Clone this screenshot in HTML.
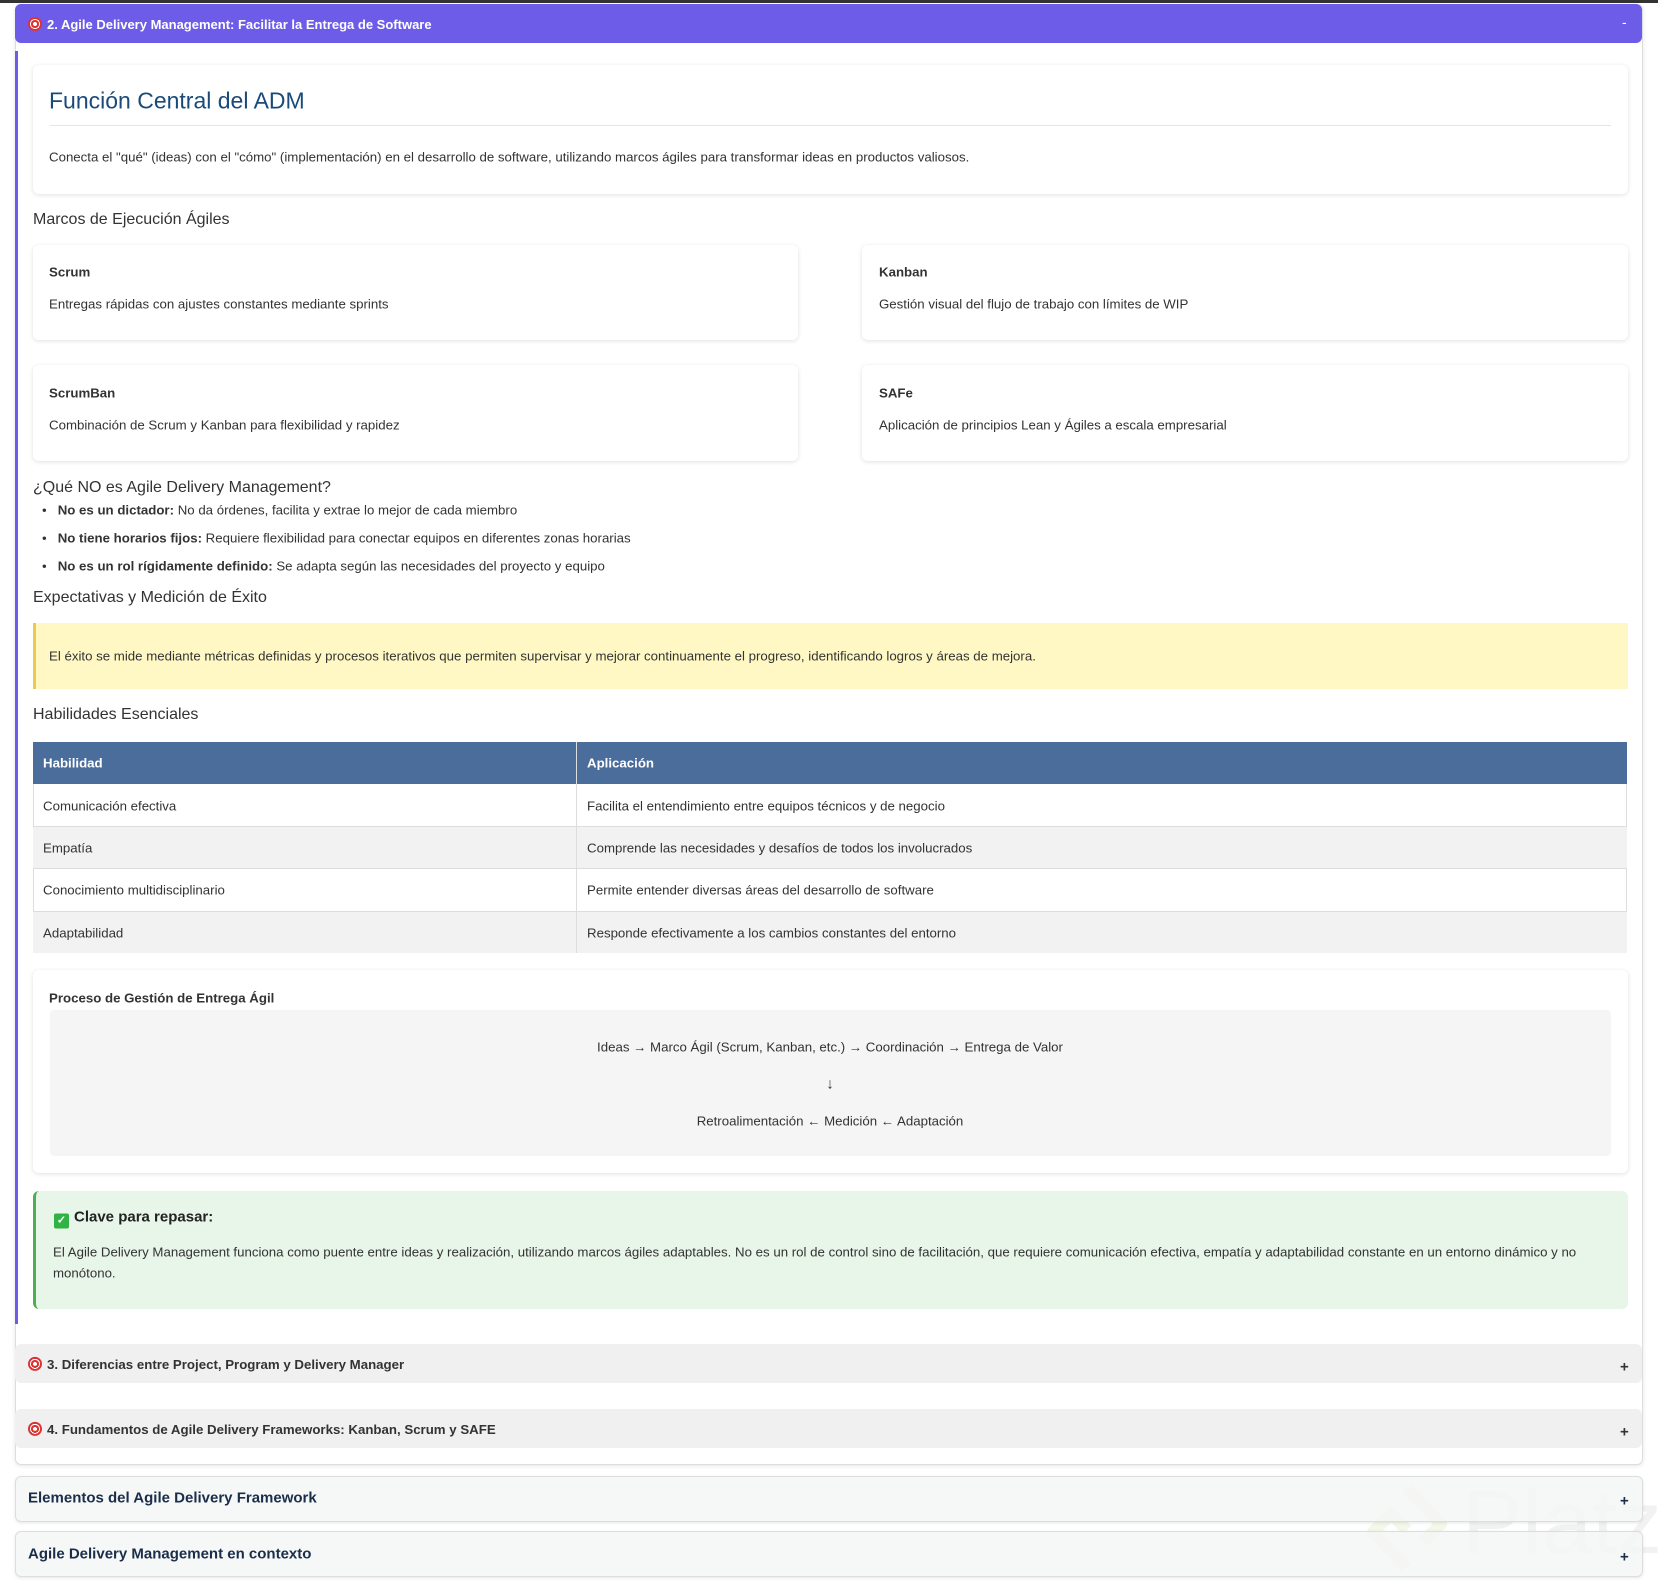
<!DOCTYPE html>
<html><head><meta charset="utf-8"><style>
*{margin:0;padding:0;box-sizing:border-box}
body{width:1658px;height:1588px;background:#fff;font-family:"Liberation Sans",sans-serif;color:#333;position:relative;overflow:hidden;font-size:13.25px}
.a{position:absolute}
.card{position:absolute;background:#fff;border-radius:6px;box-shadow:0 1px 5px rgba(0,0,0,.12)}
.t{position:absolute;white-space:nowrap;line-height:1;transform:translateY(-50%)}
.h{font-size:16px;color:#333}
.b{font-weight:bold}
.icon{display:inline-block;width:14px;height:14px;border-radius:50%;background:radial-gradient(circle,#fff 0 2px,#d33 2px 4px,#fff 4px 5px,#d33 5px);vertical-align:-2px;margin-right:5px}
</style></head><body>
<div class="a" style="left:0;top:0;width:1658px;height:3px;background:#333"></div>
<div class="a" style="left:15px;top:4px;width:1628px;height:1461px;border:1px solid #ddd;border-radius:6px;box-shadow:0 1px 4px rgba(0,0,0,.1)"></div>
<div class="a" style="left:15px;top:4px;width:1627px;height:39px;background:#6c5ce7;border-radius:6px"></div>
<div class="t b" style="left:28px;top:24px;color:#fff;font-size:13px"><span class="icon"></span>2. Agile Delivery Management: Facilitar la Entrega de Software</div>
<div class="t" style="left:1622px;top:22px;color:#fff;font-size:14px">-</div>
<div class="a" style="left:15px;top:51px;width:3px;height:1273px;background:#6c5ce7"></div>

<div class="card" style="left:33px;top:65px;width:1595px;height:129px"></div>
<div class="t" style="left:49px;top:101px;font-size:23px;color:#1a4a7a">Función Central del ADM</div>
<div class="a" style="left:50px;top:125px;width:1561px;height:1px;background:#e5e5e5"></div>
<div class="t" style="left:49px;top:157px">Conecta el "qué" (ideas) con el "cómo" (implementación) en el desarrollo de software, utilizando marcos ágiles para transformar ideas en productos valiosos.</div>

<div class="t h" style="left:33px;top:220px">Marcos de Ejecución Ágiles</div>
<div class="card" style="left:33px;top:245px;width:765px;height:95px"></div>
<div class="card" style="left:862px;top:245px;width:766px;height:95px"></div>
<div class="card" style="left:33px;top:365px;width:765px;height:96px"></div>
<div class="card" style="left:862px;top:365px;width:766px;height:96px"></div>
<div class="t b" style="left:49px;top:272px">Scrum</div>
<div class="t" style="left:49px;top:304px">Entregas rápidas con ajustes constantes mediante sprints</div>
<div class="t b" style="left:879px;top:272px">Kanban</div>
<div class="t" style="left:879px;top:304px">Gestión visual del flujo de trabajo con límites de WIP</div>
<div class="t b" style="left:49px;top:393px">ScrumBan</div>
<div class="t" style="left:49px;top:425px">Combinación de Scrum y Kanban para flexibilidad y rapidez</div>
<div class="t b" style="left:879px;top:393px">SAFe</div>
<div class="t" style="left:879px;top:425px">Aplicación de principios Lean y Ágiles a escala empresarial</div>

<div class="t h" style="left:33px;top:488px">¿Qué NO es Agile Delivery Management?</div>
<div class="t" style="left:42px;top:510px">•&nbsp;&nbsp;&nbsp;<b>No es un dictador:</b> No da órdenes, facilita y extrae lo mejor de cada miembro</div>
<div class="t" style="left:42px;top:538px">•&nbsp;&nbsp;&nbsp;<b>No tiene horarios fijos:</b> Requiere flexibilidad para conectar equipos en diferentes zonas horarias</div>
<div class="t" style="left:42px;top:566px">•&nbsp;&nbsp;&nbsp;<b>No es un rol rígidamente definido:</b> Se adapta según las necesidades del proyecto y equipo</div>

<div class="t h" style="left:33px;top:598px">Expectativas y Medición de Éxito</div>
<div class="a" style="left:33px;top:623px;width:1595px;height:66px;background:#fff8c4;border-left:3px solid #f0c94a"></div>
<div class="t" style="left:49px;top:656px">El éxito se mide mediante métricas definidas y procesos iterativos que permiten supervisar y mejorar continuamente el progreso, identificando logros y áreas de mejora.</div>

<div class="t h" style="left:33px;top:715px">Habilidades Esenciales</div>
<div class="a" style="left:33px;top:742px;width:1594px;height:211px;border:1px solid #ddd"></div>
<div class="a" style="left:33px;top:742px;width:1594px;height:42px;background:#4a6d9c"></div>
<div class="a" style="left:33px;top:826px;width:1594px;height:43px;background:#f2f2f2;border-top:1px solid #ddd;border-bottom:1px solid #ddd"></div>
<div class="a" style="left:33px;top:911px;width:1594px;height:42px;background:#f2f2f2;border-top:1px solid #ddd"></div>
<div class="a" style="left:576px;top:742px;width:1px;height:211px;background:#ddd"></div>
<div class="t b" style="left:43px;top:763px;color:#fff">Habilidad</div>
<div class="t b" style="left:587px;top:763px;color:#fff">Aplicación</div>
<div class="t" style="left:43px;top:806px">Comunicación efectiva</div>
<div class="t" style="left:587px;top:806px">Facilita el entendimiento entre equipos técnicos y de negocio</div>
<div class="t" style="left:43px;top:848px">Empatía</div>
<div class="t" style="left:587px;top:848px">Comprende las necesidades y desafíos de todos los involucrados</div>
<div class="t" style="left:43px;top:890px">Conocimiento multidisciplinario</div>
<div class="t" style="left:587px;top:890px">Permite entender diversas áreas del desarrollo de software</div>
<div class="t" style="left:43px;top:933px">Adaptabilidad</div>
<div class="t" style="left:587px;top:933px">Responde efectivamente a los cambios constantes del entorno</div>

<div class="card" style="left:33px;top:970px;width:1595px;height:203px"></div>
<div class="t b" style="left:49px;top:998px">Proceso de Gestión de Entrega Ágil</div>
<div class="a" style="left:50px;top:1010px;width:1561px;height:146px;background:#f5f5f5;border-radius:4px"></div>
<div class="t" style="left:830px;top:1047px;transform:translate(-50%,-50%)">Ideas → Marco Ágil (Scrum, Kanban, etc.) → Coordinación → Entrega de Valor</div>
<div class="t" style="left:830px;top:1084px;transform:translate(-50%,-50%);font-size:15px">↓</div>
<div class="t" style="left:830px;top:1121px;transform:translate(-50%,-50%)">Retroalimentación ← Medición ← Adaptación</div>

<div class="a" style="left:33px;top:1191px;width:1595px;height:118px;background:#e8f5e9;border-left:3px solid #4caf50;border-radius:6px"></div>
<div class="t b" style="left:54px;top:1219px;font-size:15px;color:#222"><span style="display:inline-block;width:15px;height:15px;background:#2fb344;color:#fff;font-size:11px;text-align:center;line-height:15px;border-radius:2px;vertical-align:-2px;margin-right:5px">✓</span>Clave para repasar:</div>
<div class="t" style="left:53px;top:1252px">El Agile Delivery Management funciona como puente entre ideas y realización, utilizando marcos ágiles adaptables. No es un rol de control sino de facilitación, que requiere comunicación efectiva, empatía y adaptabilidad constante en un entorno dinámico y no</div>
<div class="t" style="left:53px;top:1273px">monótono.</div>

<div class="a" style="left:15px;top:1344px;width:1627px;height:39px;background:#f0f0f0;border-radius:6px"></div>
<div class="t b" style="left:28px;top:1364px;color:#333"><span class="icon"></span>3. Diferencias entre Project, Program y Delivery Manager</div>
<div class="t b" style="left:1620px;top:1367px;font-size:15px">+</div>
<div class="a" style="left:15px;top:1409px;width:1627px;height:39px;background:#f0f0f0;border-radius:6px"></div>
<div class="t b" style="left:28px;top:1429px;color:#333"><span class="icon"></span>4. Fundamentos de Agile Delivery Frameworks: Kanban, Scrum y SAFE</div>
<div class="t b" style="left:1620px;top:1432px;font-size:15px">+</div>

<svg class="a" style="left:1365px;top:1482px" width="84" height="92" viewBox="0 0 84 92"><path d="M42 6 L76 42 L58 60 M42 86 L8 50 L26 32 L42 48" fill="none" stroke="rgba(160,200,80,.12)" stroke-width="12" stroke-linejoin="round"/></svg>
<div class="a" style="left:1462px;top:1478px;font-size:90px;color:rgba(0,0,0,.05);line-height:1">Platzi</div>

<div class="a" style="left:15px;top:1476px;width:1628px;height:46px;background:rgba(245,246,246,.85);border:1px solid #ddd;border-radius:6px;box-shadow:0 1px 3px rgba(0,0,0,.1)"></div>
<div class="t b" style="left:28px;top:1498px;font-size:15px;color:#1a2e4a">Elementos del Agile Delivery Framework</div>
<div class="t b" style="left:1620px;top:1501px;font-size:15px;color:#1a2e4a">+</div>
<div class="a" style="left:15px;top:1531px;width:1628px;height:46px;background:rgba(245,246,246,.85);border:1px solid #ddd;border-radius:6px;box-shadow:0 1px 3px rgba(0,0,0,.1)"></div>
<div class="t b" style="left:28px;top:1554px;font-size:15px;color:#1a2e4a">Agile Delivery Management en contexto</div>
<div class="t b" style="left:1620px;top:1557px;font-size:15px;color:#1a2e4a">+</div>
</body></html>
